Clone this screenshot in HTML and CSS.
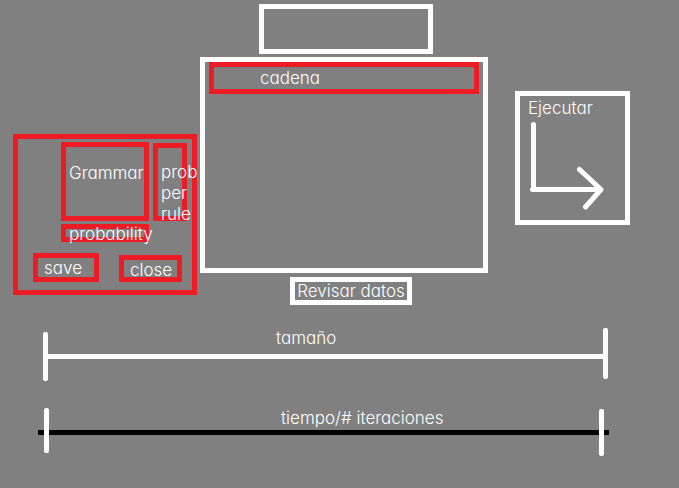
FILE: index.html
```html
<!DOCTYPE html>
<html lang="es">
<head>
<meta charset="utf-8">
<meta name="viewport" content="width=device-width, initial-scale=1">
<title>Cadena</title>
<link rel="stylesheet" href="styles.css">
</head>
<body>
<main>
  <div class="workspace">
    <form class="panel">
      <div class="rules">
        <div class="field grammar">
          <textarea id="grammar"></textarea>
          <label for="grammar">Grammar</label>
        </div>
        <div class="field per-rule">
          <textarea id="per-rule"></textarea>
          <label for="per-rule">prob per rule</label>
        </div>
        <div class="field probability">
          <input id="probability" type="text">
          <label for="probability">probability</label>
        </div>
      </div>
      <div class="actions">
        <button class="save" type="button">save</button>
        <button class="close" type="button">close</button>
      </div>
    </form>

    <div class="center">
      <input class="title" type="text" aria-label="Título">
      <section class="board">
        <div class="field cadena">
          <input id="cadena" type="text">
          <label for="cadena">cadena</label>
        </div>
      </section>
      <button class="review" type="button">Revisar datos</button>
    </div>

    <button class="run" type="button">
      <span>Ejecutar</span>
      <svg viewBox="0 0 76 91" width="76" height="91" aria-hidden="true">
        <path d="M5.500 5.500V70.500M4.500 70.500H72M51.500 50.500L73 70.500L57.500 88"/>
      </svg>
    </button>
  </div>

  <div class="scale size">
    <input id="size" type="range" min="0" max="100" value="0">
    <span class="end"></span>
    <label for="size">tamaño</label>
  </div>
  <div class="scale time">
    <input id="time" type="range" min="0" max="100" value="1">
    <span class="end"></span>
    <label for="time">tiempo/# iteraciones</label>
  </div>
</main>
</body>
</html>
```
FILE: styles.css
```css
* {
  box-sizing: border-box;
}

body {
  margin: 0;
  background: #808080;
}

body,
button,
input,
textarea {
  color: #fff;
  font-family: "Century Gothic", Inter, sans-serif;
  font-size: 17px;
  font-weight: 300;
  font-feature-settings: "cv11";
  line-height: 21px;
}

button,
textarea,
input {
  display: block;
  min-width: 0;
  margin: 0;
  padding: 0;
  border: 5px solid #fff;
  border-radius: 0;
  background: transparent;
  resize: none;
}

.workspace {
  display: grid;
  grid-template-columns: minmax(0, 184fr) minmax(0, 288fr) minmax(0, 139fr);
  gap: 3px;
  align-items: start;
  padding: 4px 49px 0 13px;
}

/* A field stacks its label on top of its control. */
.field,
.scale {
  display: grid;
}

.field {
  grid-template-columns: minmax(0, 1fr);
}

.field > *,
.scale > * {
  grid-area: 1 / 1;
}

.field > textarea,
.field > input {
  width: 100%;
  height: 100%;
  border-color: #ed1c24;
}

.field > label {
  z-index: 1;
}

.panel {
  margin-top: 130px;
  padding: 3px 5px 8px 15px;
  border: 5px solid #ed1c24;
}

.rules {
  display: grid;
  grid-template-columns: minmax(0, 88fr) minmax(0, 34fr);
  grid-template-rows: 79px 18px;
  gap: 3px 4px;
  padding-left: 28px;
}

.grammar label {
  padding: 21px 0 0 8px;
}

.per-rule {
  grid-template-rows: 78px;
  align-self: end;
}

.per-rule label {
  padding: 19px 0 0 8px;
}

.probability {
  grid-template-rows: 18px;
}

.probability label {
  padding-left: 8px;
}

.actions {
  display: flex;
  justify-content: space-between;
  align-items: end;
  margin: 11px 5px 0 0;
}

.actions button {
  border-color: #ed1c24;
  text-align: left;
}

.save {
  width: 66px;
  height: 29px;
  padding-left: 6px;
}

.close {
  width: 63px;
  height: 27px;
  padding-left: 6px;
}

.center {
  display: flex;
  flex-direction: column;
  align-items: center;
}

.title {
  width: 174px;
  height: 50px;
  margin-left: 4px;
}

.board {
  width: 100%;
  height: 216px;
  margin: 3px 0 4px;
  padding: 0 4px;
  border: 5px solid #fff;
}

.cadena {
  height: 32px;
}

.cadena label {
  padding: 6px 0 0 51px;
}

.review {
  width: 122px;
  height: 28px;
  margin-left: 14px;
  line-height: 18px;
  white-space: nowrap;
}

.run {
  margin: 87px 0 0 24px;
  padding: 2px 8px 10px;
  text-align: left;
}

.run span,
.run svg {
  display: block;
}

.run path {
  fill: none;
  stroke: #fff;
  stroke-width: 5px;
  stroke-linecap: round;
  stroke-linejoin: round;
}

.scale > input {
  appearance: none;
  width: 100%;
  border: 0;
  background: linear-gradient(#fff, #fff) 0 22px / 100% 5px no-repeat;
}

.scale > input::-webkit-slider-thumb {
  appearance: none;
  width: 5px;
  height: 49px;
  border-radius: 2px;
  background: #fff;
}

.end {
  justify-self: end;
  width: 5px;
  border-radius: 2px;
  background: #fff;
}

.scale > label {
  justify-self: start;
}

.size {
  margin: 23px 71px 0 43px;
}

.size > input {
  align-self: end;
  height: 49px;
}

.size .end {
  height: 51px;
  margin-bottom: 2px;
}

.size label {
  margin-left: 233px;
}

.time {
  margin: 27px 70px 0 38px;
}

.time > input {
  height: 45px;
  border-radius: 2px;
  background-image: linear-gradient(#000, #000);
}

.time > input::-webkit-slider-thumb {
  height: 45px;
}

.time .end {
  height: 47px;
  margin: 1px 5px 0 0;
}

.time label {
  margin-left: 243px;
}
```
